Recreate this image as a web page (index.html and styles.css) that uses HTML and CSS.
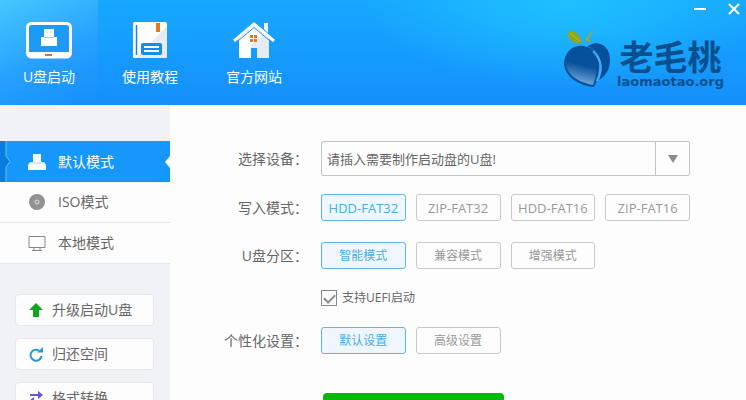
FILE: index.html
```html
<!DOCTYPE html>
<html lang="zh-CN">
<head>
<meta charset="utf-8">
<title>老毛桃</title>
<link rel="stylesheet" href="styles.css">
</head>
<body>
<div class="app">
  <header class="header">
    <nav class="tabs">
      <a class="tab tab-active" href="#usb">
        <svg width="46" height="38" viewBox="0 0 46 38">
          <rect x="1.500" y="2.500" width="43" height="33.500" rx="4" fill="#1c9af5" stroke="#fff" stroke-width="3"/>
          <path d="M2 31H44V33Q44 36 40 36H6Q2 36 2 33Z" fill="#fff"/>
          <path d="M18 8H28V16H31V25H15V16H18Z" fill="#fff"/>
          <path d="M18 16.500H28" stroke="#9bd2f8"/>
          <path d="M20 11H22M24 11H26" stroke="#9bd2f8"/>
          <rect x="19" y="33" width="7" height="2" fill="#d9713c"/>
        </svg>
        <span>U盘启动</span>
      </a>
      <a class="tab" href="#guide">
        <svg width="34" height="38" viewBox="0 0 34 38">
          <rect y="1" width="34" height="36" rx="1.500" fill="#fff"/>
          <path d="M34 5V35.500Q34 37 32.500 37H3Z" fill="#e6ebf3"/>
          <path d="M3.500 4V34" stroke="#1487dc" stroke-width="1.500"/>
          <rect x="23" y="2" width="4" height="9" fill="#e07828"/>
          <rect x="8" y="22" width="21" height="12" rx="2" fill="#178de5"/>
          <path d="M11 26H26M11 30H26" stroke="#fff" stroke-width="2"/>
        </svg>
        <span>使用教程</span>
      </a>
      <a class="tab" href="#site">
        <svg width="42" height="38" viewBox="0 0 42 38">
          <path d="M6 18L21 5L36 18V37H24V27H18V37H6Z" fill="#fff"/>
          <path d="M36 18V37H24V27H18V24L31 13Z" fill="#e6ebf3"/>
          <path d="M31 2H35V12L31 8Z" fill="#fff"/>
          <path d="M1 20L21 3L41 20" fill="none" stroke="#fff" stroke-width="3"/>
          <path d="M5 20L21 6.500L37 20" fill="none" stroke="#2494ea"/>
          <path d="M17 14H20V17H17ZM21 14H24V17H21ZM17 18H20V21H17ZM21 18H24V21H21Z" fill="#e07828"/>
        </svg>
        <span>官方网站</span>
      </a>
    </nav>
    <div class="brand">
      <svg width="48" height="62" viewBox="0 0 48 62">
        <defs>
          <linearGradient id="peach" x1="0.6" y1="0" x2="0.4" y2="1">
            <stop offset="0.45" stop-color="#07509b"/>
            <stop offset="1" stop-color="#7fb2e0"/>
          </linearGradient>
        </defs>
        <path d="M5 5C11 2 18 7 19 16C11 18 4 13 5 5Z" fill="#8fa51c"/>
        <path d="M7 6L17 14" stroke="#b9bd3c"/>
        <path d="M22 12L31 2L28 8L25 11L29 16L24 14Z" fill="#a3ab25"/>
        <path d="M24 20C31 13 43 16 46 26C49 37 45 48 36 53C41 41 39 30 30 22Q28 20 24 20Z" fill="#07509b"/>
        <path d="M24 20C34 21 38 32 36 42Q35 52 31 60C18 59 2 51 1 37C1 25 11 15 24 20Z" fill="#07509b"/>
        <path d="M23 22C32 24 35 33 34 42Q33 51 30 58C18 56 4 49 3 37C3 27 12 19 23 22Z" fill="url(#peach)"/>
        <path d="M30 24C38 32 40 42 34 54" fill="none" stroke="#48aaf0" stroke-width="2"/>
      </svg>
      <div class="brand-text">
        <strong>老毛桃</strong>
        <span>laomaotao.org</span>
      </div>
    </div>
    <div class="window-controls">
      <button type="button" aria-label="最小化"><svg width="12" height="12" viewBox="0 0 12 12"><path d="M0 6H12" stroke="#fff" stroke-width="2"/></svg></button>
      <button type="button" aria-label="关闭"><svg width="12" height="12" viewBox="0 0 12 12"><path d="M1 1L11 11M11 1L1 11" stroke="#fff" stroke-width="2"/></svg></button>
    </div>
  </header>
  <div class="body">
    <aside class="sidebar">
      <nav class="modes">
        <a class="mode mode-active" href="#default">
          <svg class="notch" width="12" height="41" viewBox="0 0 12 41"><path d="M0 0H6V15L10 20.500L6 26V41H0Z" fill="#087fe0"/><path d="M6 0V15L10 20.500L6 26V41" fill="none" stroke="#67c1fb"/></svg>
          <svg width="18" height="18" viewBox="0 0 18 18"><path d="M5 1H13V9H16L18 12V17H0V12L2 9H5Z" fill="#fff"/><path d="M2 10H16M7 4H8M10 4H11" stroke="#9dd3fc"/></svg>
          <span>默认模式</span>
        </a>
        <a class="mode" href="#iso">
          <svg width="18" height="18" viewBox="0 0 18 18"><circle cx="9" cy="9" r="8" fill="#929292"/><circle cx="9" cy="9" r="2" fill="#929292" stroke="#e4e4e4"/></svg>
          <span>ISO模式</span>
        </a>
        <a class="mode" href="#local">
          <svg width="18" height="18" viewBox="0 0 18 18"><path d="M1 2.500H17V13.500H1ZM6 14V16M12 14V16M4 16.500H14" fill="none" stroke="#858585"/></svg>
          <span>本地模式</span>
        </a>
      </nav>
      <div class="tools">
        <button class="tool" type="button">
          <svg width="14" height="16" viewBox="0 0 14 16"><path d="M7 1L14 8H10V15H4V8H0Z" fill="#12a51b"/></svg>
          <span>升级启动U盘</span>
        </button>
        <button class="tool" type="button">
          <svg width="14" height="16" viewBox="0 0 14 16"><path d="M10 4.500A5.500 5.500 0 1 0 12.500 10" fill="none" stroke="#2b94d1" stroke-width="2"/><path d="M8 6.500H14V1Z" fill="#2b94d1"/></svg>
          <span>归还空间</span>
        </button>
        <button class="tool" type="button">
          <svg width="14" height="16" viewBox="0 0 14 16"><path d="M1 5H10M4 11H13" stroke="#6957cf" stroke-width="2"/><path d="M9 1L14 5L9 9ZM5 7L0 11L5 15Z" fill="#6957cf"/></svg>
          <span>格式转换</span>
        </button>
      </div>
    </aside>
    <main class="content">
      <form class="form">
        <label class="label device-row" for="device">选择设备<span class="colon">：</span></label>
        <div class="select-box device-row">
          <select id="device"><option>请插入需要制作启动盘的U盘!</option></select>
          <span class="arrow"><svg width="12" height="8" viewBox="0 0 12 8"><path d="M1 0H11L6 8Z" fill="#8c8c8c"/></svg></span>
        </div>
        <span class="label">写入模式<span class="colon">：</span></span>
        <div class="options formats">
          <button class="option option-active" type="button">HDD-FAT32</button>
          <button class="option" type="button">ZIP-FAT32</button>
          <button class="option" type="button">HDD-FAT16</button>
          <button class="option" type="button">ZIP-FAT16</button>
        </div>
        <span class="label">U盘分区<span class="colon">：</span></span>
        <div class="options">
          <button class="option option-active" type="button">智能模式</button>
          <button class="option" type="button">兼容模式</button>
          <button class="option" type="button">增强模式</button>
        </div>
        <label class="check"><input type="checkbox" checked><span>支持UEFI启动</span></label>
        <span class="label">个性化设置<span class="colon">：</span></span>
        <div class="options">
          <button class="option option-active" type="button">默认设置</button>
          <button class="option" type="button">高级设置</button>
        </div>
        <button class="start" type="submit" aria-label="开始制作"></button>
      </form>
    </main>
  </div>
</div>
</body>
</html>
```
FILE: styles.css
```css
* { box-sizing: border-box; }

body {
  margin: 0;
  font-family: "Open Sans", "Noto Sans CJK SC", sans-serif;
  font-size: 14px;
  line-height: 20px;
  color: #666;
}

button, select {
  font: inherit;
  color: inherit;
  margin: 0;
  padding: 0;
}

a { color: inherit; text-decoration: none; }
svg { display: block; flex: none; }

.app {
  display: flex;
  flex-direction: column;
  height: 100vh;
  overflow: hidden;
}

.header {
  position: relative;
  display: flex;
  flex: none;
  justify-content: space-between;
  color: #fff;
  background:
    radial-gradient(ellipse 200px 90px at 76% 0, #1fc0ff, transparent),
    linear-gradient(#17a8ff, #158ffb);
}

.tabs { display: flex; }

.tab {
  display: flex;
  flex-direction: column;
  align-items: center;
  gap: 8px;
  width: 104px;
  padding: 21px 0 18px;
}

.tab-active {
  width: 98px;
  background: linear-gradient(155deg, #47c7ff, #269fff 55%, #158efb);
}

.brand {
  display: flex;
  gap: 6px;
  padding: 27px 22px 0 0;
  color: #07508f;
}

.brand-text {
  display: flex;
  flex-direction: column;
  align-items: center;
  padding-top: 12px;
}

.brand-text strong {
  font-size: 34px;
  line-height: 36px;
  font-weight: 700;
}

.brand-text span {
  font: bold 13px/14px "DejaVu Sans", sans-serif;
}

.window-controls {
  position: absolute;
  top: 3px;
  right: 6px;
  display: flex;
  gap: 22px;
}

.window-controls button { border: 0; background: none; }

.body {
  display: flex;
  flex: 1;
  min-height: 0;
}

.sidebar {
  flex: none;
  width: 170px;
  padding-top: 36px;
  background: #f0f2f6;
}

.mode {
  position: relative;
  display: flex;
  align-items: center;
  gap: 12px;
  height: 41px;
  padding-left: 28px;
  background: #fdfdfd;
  border-bottom: 1px solid #e4e6e9;
}

.mode-active {
  color: #fff;
  background: #1697fc;
  border: 0;
}

.mode-active::after {
  content: "";
  position: absolute;
  right: 0;
  border: solid transparent;
  border-width: 6px 5px 6px 0;
  border-right-color: #fdfdfd;
}

.notch { position: absolute; left: 0; top: 0; }

.tools {
  display: flex;
  flex-direction: column;
  gap: 12px;
  padding: 30px 16px 0 15px;
}

.tool {
  display: flex;
  align-items: center;
  gap: 9px;
  height: 32px;
  padding-left: 13px;
  background: #fdfdfd;
  border: 1px solid #e6e8eb;
  border-radius: 4px;
}

.content {
  flex: 1;
  padding: 36px 56px 0 46px;
  background: #fdfdfd;
}

.form {
  display: grid;
  grid-template-columns: 92px 1fr;
  column-gap: 13px;
  row-gap: 21px;
  align-items: center;
}

.label { text-align: right; white-space: nowrap; }
.colon { font-family: "Noto Sans CJK TC", sans-serif; }
.device-row { margin-bottom: -3px; }

.select-box {
  position: relative;
  display: flex;
  height: 35px;
}

.select-box select {
  flex: 1;
  padding: 0 40px 0 5px;
  font-size: 13px;
  background: #fdfdfd;
  border: 1px solid #c4c4c4;
  border-radius: 2px;
  appearance: none;
}

.arrow {
  position: absolute;
  top: 1px;
  right: 1px;
  bottom: 1px;
  display: grid;
  place-items: center;
  width: 34px;
  border-left: 1px solid #c4c4c4;
  pointer-events: none;
}

.options {
  display: grid;
  grid-template-columns: repeat(4, 1fr);
  gap: 10px;
}

.option {
  height: 27px;
  font-size: 12px;
  color: #999;
  background: #fdfdfd;
  border: 1px solid #c8c8c8;
  border-radius: 3px;
}

.formats .option { font-size: 13px; }

.option-active {
  color: #45adec;
  background: #f0f6fd;
  border-color: #5cb6ea;
}

.check {
  grid-column: 2;
  display: flex;
  align-items: center;
  gap: 5px;
  height: 16px;
  font-size: 12px;
}

.check input {
  display: grid;
  place-items: center;
  width: 16px;
  height: 16px;
  margin: 0;
  border: 1px solid #888;
  appearance: none;
}

.check input:checked::before {
  content: "";
  width: 9px;
  height: 5px;
  border: solid #888;
  border-width: 0 0 2px 2px;
  transform: translateY(-1px) rotate(-45deg);
}

.start {
  grid-column: 2;
  width: 49%;
  height: 44px;
  margin: 18px 0 0 2px;
  background: #08b80d;
  border: 0;
  border-radius: 4px;
}
```
